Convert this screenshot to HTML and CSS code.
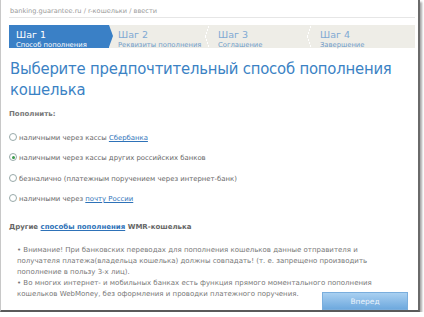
FILE: index.html
```html
<!DOCTYPE html>
<html>
<head>
<meta charset="utf-8">
<link rel="stylesheet" href="styles.css">
</head>
<body>
<div class="frame">
  <div class="crumbs">banking.guarantee.ru / r-кошельки / ввести</div>
  <div class="steps">
    <div class="step active"><div class="st">Шаг 1</div><div class="sd">Способ пополнения</div></div>
    <div class="step s2"><div class="st">Шаг 2</div><div class="sd">Реквизиты пополнения</div></div>
    <div class="step s3"><div class="st">Шаг 3</div><div class="sd">Соглашение</div></div>
    <div class="step s4"><div class="st">Шаг 4</div><div class="sd">Завершение</div></div>
  </div>
  <h1 class="title">Выберите предпочтительный способ пополнения кошелька</h1>
  <div class="label">Пополнить:</div>
  <ul class="opts">
    <li><span class="radio"></span>наличными через кассы <a href="#">Сбербанка</a></li>
    <li><span class="radio on"></span>наличными через кассы других российских банков</li>
    <li><span class="radio"></span>безналично (платежным поручением через интернет-банк)</li>
    <li><span class="radio"></span>наличными через <a href="#">почту России</a></li>
  </ul>
  <div class="other">Другие <a href="#">способы пополнения</a> WMR-кошелька</div>
  <div class="notes">
    <p>• Внимание! При банковских переводах для пополнения кошельков данные отправителя и получателя платежа(владельца кошелька) должны совпадать! (т. е. запрещено производить пополнение в пользу 3-х лиц).</p>
    <p>• Во многих интернет- и мобильных банках есть функция прямого моментального пополнения кошельков WebMoney, без оформления и проводки платежного поручения.</p>
  </div>
  <button class="next">Вперед</button>
</div>
</body>
</html>
```
FILE: styles.css
```css
html, body { margin: 0; padding: 0; background: #fff; }
body { font-family: "DejaVu Sans", Verdana, sans-serif; color: #666; }
.frame {
  position: relative;
  width: 420px; height: 312px;
  border-left: 1px solid #c8c8c8;
  border-right: 2px solid #6a6a6a;
  border-bottom: 2px solid #5a5a5a;
  box-shadow: 2px 2px 2px rgba(0,0,0,0.35);
  overflow: hidden;
  box-sizing: border-box;
  padding: 0 0 0 8px;
}
.crumbs {
  font-size: 6.6px; color: #999; padding: 7px 0 0 1px; height: 10px;
  border-bottom: 1px solid #e6e6e6; margin-right: 3px;
}
.steps {
  display: flex; height: 23px; margin: 7px 3px 0 0;
  background: #eeede7;
}
.step { position: relative; padding: 5px 0 0 7px; box-sizing: border-box; }
.step.active { background: #3a80c6; width: 100px; }
.step.active::after {
  content: ""; position: absolute; right: -4px; top: 0;
  border-left: 4px solid #3a80c6; border-top: 11.5px solid transparent; border-bottom: 11.5px solid transparent;
}
.s2 { width: 102px; padding-left: 9px; }
.s3 { width: 102px; }
.s4 { flex: 1; }
.s3::before, .s4::before {
  content: ""; position: absolute; left: -6px; top: 0; width: 4px; height: 23px;
  background: linear-gradient(to bottom right, transparent 48%, #fff 49%, #fff 55%, transparent 56%) top/4px 12px no-repeat,
              linear-gradient(to top right, transparent 48%, #fff 49%, #fff 55%, transparent 56%) bottom/4px 12px no-repeat;
}
.st { font-size: 9.5px; color: #7fa9d3; line-height: 10px; }
.sd { font-size: 6.8px; color: #6f9cc9; line-height: 10px; }
.active .st, .active .sd { color: #fff; }
h1.title {
  font-family: "DejaVu Sans Condensed", "DejaVu Sans", sans-serif;
  font-stretch: condensed;
  font-weight: normal; font-size: 16.5px; line-height: 21px; color: #3b82c4;
  margin: 10px 0 0 1px; width: 400px; letter-spacing: -0.2px;
}
.label { font-size: 7px; font-weight: bold; color: #777; margin-top: 10px; }
.opts { list-style: none; margin: 15px 0 0 0; padding: 0; }
.opts li { font-size: 6.9px; color: #666; height: 20.3px; }
.radio {
  display: inline-block; vertical-align: -1px;
  width: 6px; height: 6px; border: 1px solid #9aa; border-radius: 50%;
  margin: 0 2px 0 0; position: relative; background: #fff;
}
.radio.on::after {
  content: ""; position: absolute; left: 1.5px; top: 1.5px; width: 3px; height: 3px; border-radius: 50%; background: #3a9a4a;
}
a { color: #2e72b8; }
.other { font-size: 7px; font-weight: bold; color: #666; margin-top: 9px; }
.other a { color: #2e72b8; }
.notes { margin: 14px 30px 0 8px; font-size: 7px; line-height: 11px; color: #777; }
.notes p { margin: 0; }
.next {
  position: absolute; left: 321px; top: 292px; width: 86px; height: 18px;
  border: 1px solid #7aaedd; background: linear-gradient(#a9d0f1, #6ea9de);
  color: #eaf3fb; font-family: "DejaVu Sans", sans-serif; font-size: 7.5px; padding: 0;
}
```
